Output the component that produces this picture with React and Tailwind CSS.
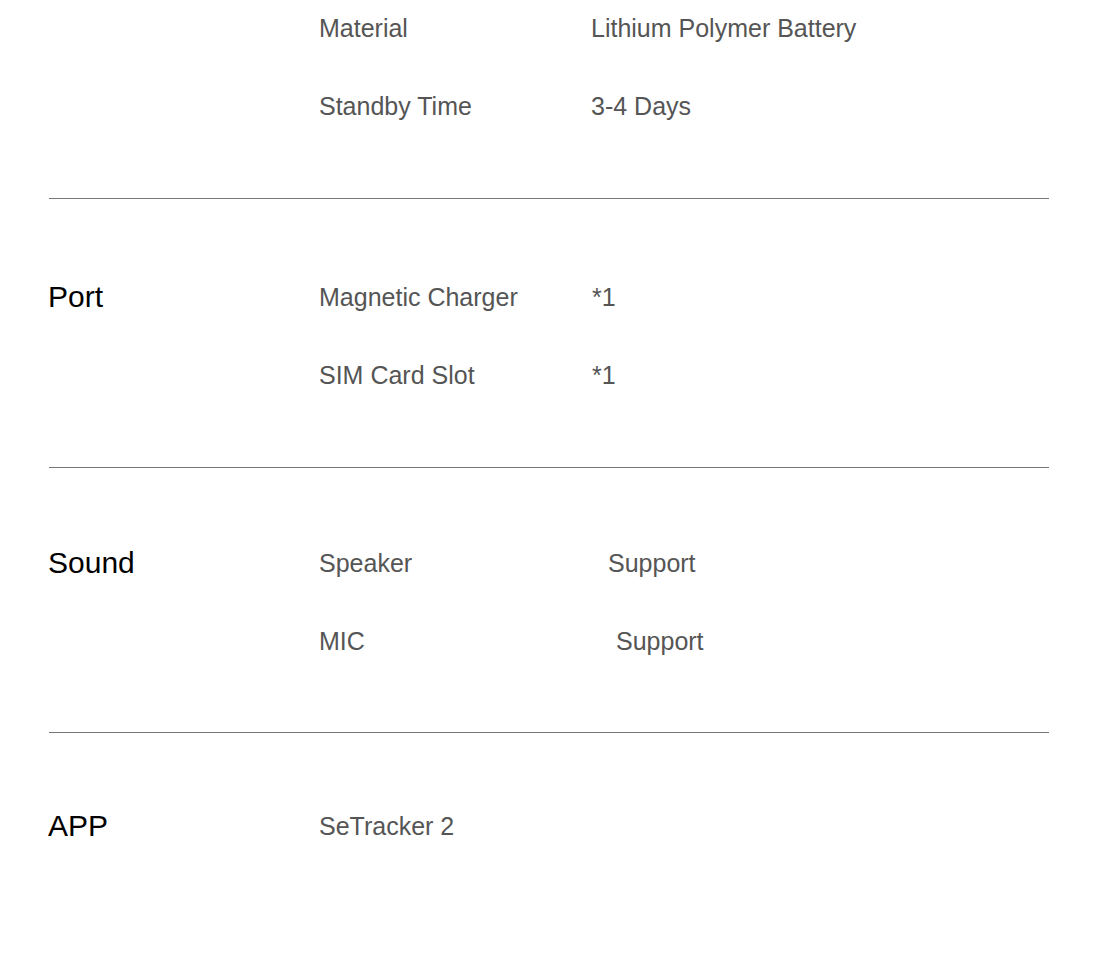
import React from 'react';

const sections = [
  {
    label: '',
    wrap: '-mt-[11px] pb-[53px] border-b border-[#777]',
    rows: [
      { name: 'Material', value: 'Lithium Polymer Battery', shift: '' },
      { name: 'Standby Time', value: '3-4 Days', shift: '' },
    ],
  },
  {
    label: 'Port',
    wrap: 'pt-[59px] pb-[53px] border-b border-[#777]',
    rows: [
      { name: 'Magnetic Charger', value: '*1', shift: 'pl-[1px]' },
      { name: 'SIM Card Slot', value: '*1', shift: 'pl-[1px]' },
    ],
  },
  {
    label: 'Sound',
    wrap: 'pt-[56px] pb-[52px] border-b border-[#777]',
    rows: [
      { name: 'Speaker', value: 'Support', shift: 'pl-[17px]' },
      { name: 'MIC', value: 'Support', shift: 'pl-[25px]' },
    ],
  },
  {
    label: 'APP',
    wrap: 'pt-[54px]',
    rows: [{ name: 'SeTracker 2', value: '', shift: '' }],
  },
];

export default function App() {
  return (
    <div className="min-h-[974px] w-[1100px] overflow-hidden bg-white font-['Liberation_Sans',Arial,sans-serif]">
      <div className="ml-[49px] w-[1000px]">
        {sections.map((s, i) => (
          <div key={i} className={'flex ' + s.wrap}>
            <div className="-ml-px w-[271px] shrink-0 text-[30px] leading-[78px] text-black">{s.label}</div>
            <div className="flex flex-col">
              {s.rows.map((r) => (
                <div key={r.name} className="flex h-[78px] items-center text-[25px] leading-[78px] text-[#555]">
                  <span className="w-[272px] shrink-0">{r.name}</span>
                  <span className={r.shift}>{r.value}</span>
                </div>
              ))}
            </div>
          </div>
        ))}
      </div>
    </div>
  );
}
